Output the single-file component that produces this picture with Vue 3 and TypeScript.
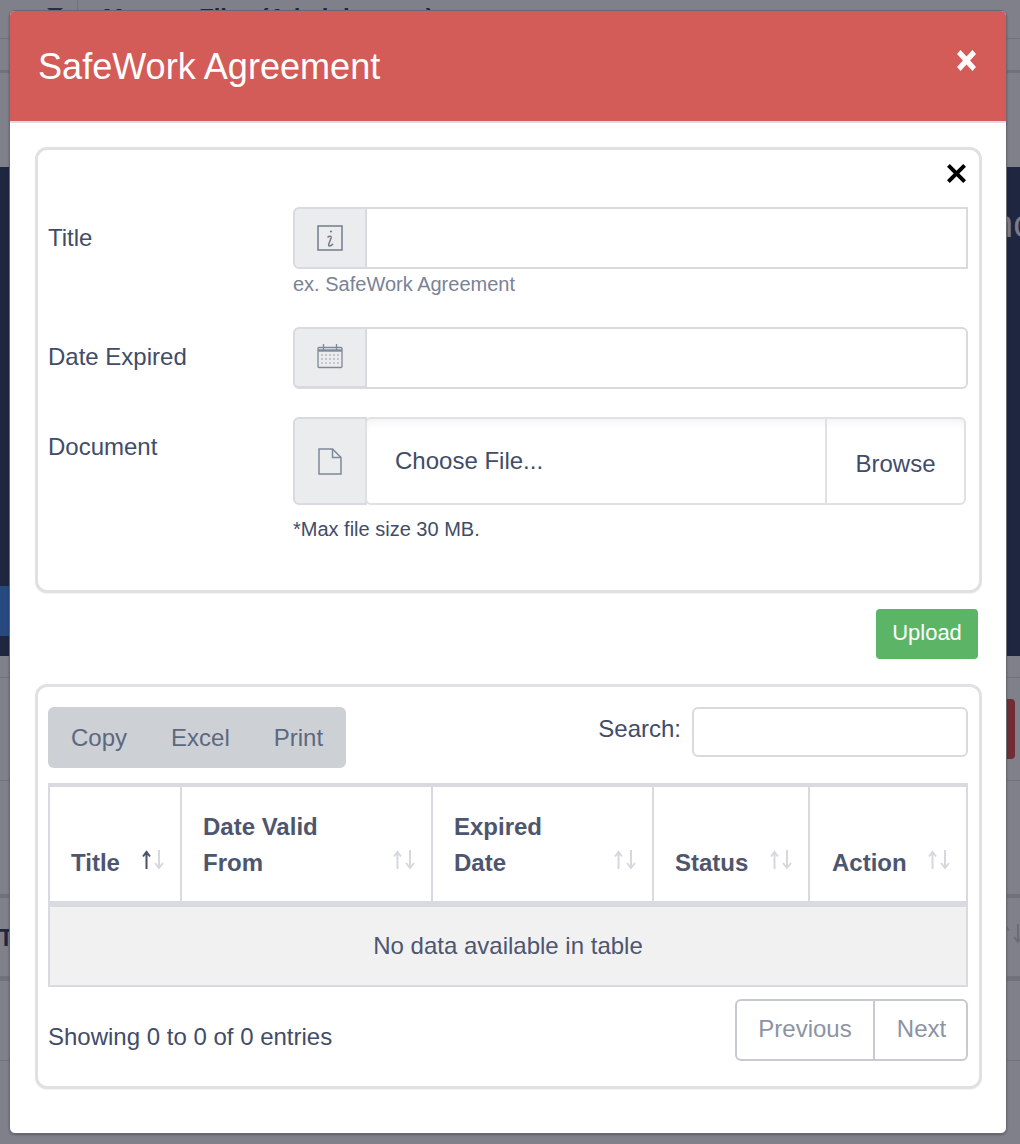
<script setup lang="ts">
interface Col { label: string[]; width: number; active?: boolean }
const cols: Col[] = [
  { label: ['Title'], width: 132, active: true },
  { label: ['Date Valid', 'From'], width: 251 },
  { label: ['Expired', 'Date'], width: 221 },
  { label: ['Status'], width: 156 },
  { label: ['Action'], width: 156 },
]
const dots: [number, number][] = []
for (let r = 0; r < 3; r++) for (let c = 0; c < 5; c++) dots.push([5 + c * 4, 11 + r * 4])
</script>

<template>
  <div class="page">
    <div class="backdrop">
      <div class="bg-row r1"><span class="caret"></span><span class="vline"></span><span class="page-title">Manage Files (Administrator)</span></div>
      <div class="bg-row r2"></div>
      <div class="bg-row r3"></div>
      <div class="navy"><span class="navy-text">nc</span><span class="blue-btn"></span></div>
      <div class="bg-row r4"></div>
      <div class="bg-row r5"><span class="red-btn"></span></div>
      <div class="bg-row r6"></div>
      <div class="bg-row r7">
        <b class="bg-t">T</b>
        <svg class="bg-sort" viewBox="0 0 24 20" width="24" height="20"><g fill="none" stroke="#6b6c78" stroke-width="2"><path d="M4.500 19V3M1 6.500 4.500 2 8 6.500"/><path d="M17 0v17M13 13l4 5 4-5"/></g></svg>
      </div>
      <div class="bg-row r8"></div>
      <div class="bg-row r9"></div>
    </div>

    <section class="modal">
      <header class="modal-head">
        <h1>SafeWork Agreement</h1>
        <svg class="x-white" viewBox="2 2 16 16" width="19" height="21" preserveAspectRatio="none"><path d="M2 5 5 2l5 5 5-5 3 3-5 5 5 5-3 3-5-5-5 5-3-3 5-5z" fill="#fff"/></svg>
      </header>
      <div class="modal-body">
        <div class="card form-card">
          <svg class="x-black" viewBox="1.500 1.500 17 17" width="19" height="19"><path d="M1.500 4 4 1.500l6 6 6-6L18.500 4l-6 6 6 6-2.500 2.500-6-6-6 6L1.500 16l6-6z" fill="#000"/></svg>

          <div class="field first">
            <label>Title</label>
            <div class="field-main">
              <div class="group square">
                <span class="addon">
                  <svg viewBox="0 0 26 26" width="26" height="26" fill="none" stroke="#737c8e" stroke-width="1.500"><rect x="1" y="1" width="24" height="24"/><path d="M10.500 12.500c2-2 4.300-1.500 3.600.6l-2.300 6c-.7 2.100 1 3 4.200-.2" stroke-width="1.500"/><circle cx="14" cy="6.500" r="1.100" fill="#737c8e" stroke="none"/></svg>
                </span>
                <span class="control"></span>
              </div>
              <small class="help">ex. SafeWork Agreement</small>
            </div>
          </div>

          <div class="field second">
            <label>Date Expired</label>
            <div class="field-main">
              <div class="group">
                <span class="addon">
                  <svg class="cal" viewBox="0 0 26 26" width="26" height="26" fill="none" stroke="#7f8899" stroke-width="1.300"><rect x="1" y="3.500" width="24" height="20" rx="1"/><path d="M1 6.500h24" stroke-width="2.400"/><path d="M6.500 0v6M19.500 0v6"/><circle v-for="(d, i) in dots" :key="i" :cx="d[0]" :cy="d[1]" r=".8" fill="#8f97a6" stroke="none"/></svg>
                </span>
                <span class="control"></span>
              </div>
            </div>
          </div>

          <div class="field third">
            <label>Document</label>
            <div class="field-main">
              <div class="group file">
                <span class="addon">
                  <svg viewBox="0 0 24 27" width="24" height="27" fill="none" stroke="#7f8899" stroke-width="1.500"><path d="M1 1h13.500L23 9.500V26H1z"/><path d="M14.500 1v8.500H23"/></svg>
                </span>
                <span class="file-box">
                  <span class="file-name">Choose File...</span>
                  <span class="browse">Browse</span>
                </span>
              </div>
              <small class="note">*Max file size 30 MB.</small>
            </div>
          </div>
        </div>

        <div class="upload-row"><button class="upload">Upload</button></div>

        <div class="card table-card">
          <div class="toolbar">
            <div class="exports"><span>Copy</span><span>Excel</span><span>Print</span></div>
            <div class="search"><label>Search:</label><span class="search-box"></span></div>
          </div>
          <table>
            <colgroup><col v-for="c in cols" :key="c.label[0]" :style="{ width: c.width + 'px' }" /></colgroup>
            <thead>
              <tr>
                <th v-for="c in cols" :key="c.label[0]">
                  <span class="th-text"><span v-for="l in c.label" :key="l">{{ l }}</span></span>
                  <svg class="sort" viewBox="0 0 24 20" width="24" height="20">
                    <g fill="none" stroke-width="2">
                      <path d="M4.500 19V3M1 6.500 4.500 2 8 6.500" :stroke="c.active ? '#4a5369' : '#d5d8df'"/>
                      <path d="M17 0v17M13 13l4 5 4-5" stroke="#d5d8df"/>
                    </g>
                  </svg>
                </th>
              </tr>
            </thead>
            <tbody>
              <tr><td colspan="5">No data available in table</td></tr>
            </tbody>
          </table>
          <div class="table-foot">
            <span class="info">Showing 0 to 0 of 0 entries</span>
            <div class="pager"><span class="prev">Previous</span><span class="next">Next</span></div>
          </div>
        </div>
      </div>
    </section>
  </div>
</template>

<style>
html, body { margin: 0; padding: 0; }
</style>

<style scoped>
.page {
  position: relative;
  width: 1020px;
  height: 1144px;
  overflow: hidden;
  font-family: "Liberation Sans", Arial, sans-serif;
  color: #414c68;
  background: #80808a;
}
.backdrop { display: flex; flex-direction: column; height: 100%; }
.bg-row { box-sizing: border-box; border-bottom: 1px solid #71717c; position: relative; }
.r1 { height: 39px; }
.r2 { height: 34px; border-bottom: 3px solid #71717c; }
.r3 { height: 94px; border-bottom: 0; }
.navy { height: 489px; background: #1f2640; position: relative; }
.r4 { height: 22px; }
.r5 { height: 103px; }
.r6 { height: 117px; border-bottom: 4px solid #71717c; }
.r7 { height: 83px; border-bottom: 5px solid #71717c; }
.r8 { height: 80px; }
.r9 { flex: 1; border-bottom: 0; }
.caret { position: absolute; left: 47px; top: 8px; width: 0; height: 0; border-left: 8px solid transparent; border-right: 8px solid transparent; border-top: 8px solid #2a2f45; }
.vline { position: absolute; left: 77px; top: 0; width: 1px; height: 12px; background: #71717c; }
.page-title { position: absolute; left: 103px; top: 4px; font-size: 24px; font-weight: 700; color: #1f2640; white-space: nowrap; }
.navy-text { position: absolute; left: 992px; top: 37px; font-size: 38px; line-height: 40px; color: #777b8a; }
.blue-btn { position: absolute; left: 0; top: 419px; width: 10px; height: 50px; background: #26497f; }
.red-btn { position: absolute; left: 990px; top: 21px; width: 25px; height: 60px; border-radius: 4px; background: #6f2d35; }
.bg-t { position: absolute; left: -1px; top: 27px; font-size: 23px; color: #1f2640; }
.bg-sort { position: absolute; left: 1001px; top: 26px; }

.modal {
  position: absolute;
  left: 9px;
  top: 10px;
  width: 998px;
  height: 1124px;
  box-sizing: border-box;
  border: 1px solid #696974;
  border-radius: 6px;
  background: #fff;
  overflow: hidden;
  box-shadow: 0 1px 2px rgba(30, 30, 45, 0.35);
}
.modal-head {
  height: 112px;
  box-sizing: border-box;
  background: #d35c58;
  border-bottom: 2px solid #dddde2;
  display: flex;
  align-items: flex-start;
  justify-content: space-between;
  padding: 0 30px 0 28px;
}
.modal-head h1 { margin: 34px 0 0; font-size: 36.100px; line-height: 44px; font-weight: 400; color: #fff; }
.x-white { margin-top: 39px; }
.modal-body { padding: 24px 25px 0 25px; }
.card {
  box-sizing: border-box;
  width: 947px;
  border: 3px solid #e1e1e3;
  border-radius: 12px;
  background: #fff;
  position: relative;
  box-shadow: 0 1px 1px rgba(0, 0, 0, 0.05);
}
.form-card { height: 446px; padding: 0 10px; }
.x-black { position: absolute; right: 13px; top: 14px; }
.field { display: flex; }
.field label { width: 245px; font-size: 24px; line-height: 30px; }
.field-main { width: 675px; }
.first { padding-top: 57px; }
.first label { padding-top: 16px; }
.second { padding-top: 30px; }
.second label { padding-top: 15px; }
.third { padding-top: 28px; }
.third label { padding-top: 15px; }
.group { display: flex; height: 62px; box-sizing: border-box; }
.addon {
  width: 74px;
  box-sizing: border-box;
  flex: none;
  background: #ebecee;
  border: 2px solid #d9dae0;
  border-radius: 6px 0 0 6px;
  display: flex;
  align-items: center;
  justify-content: center;
}
.control { flex: 1; border: 2px solid #d9dae0; border-left: 0; border-radius: 0 6px 6px 0; }
.square .control { border-radius: 0; }
.second .addon { border-bottom-width: 3px; }
.cal { margin-bottom: 2px; }
.help { display: block; margin-top: 2px; font-size: 20px; line-height: 26px; color: #7a8296; }
.file { height: 88px; width: 673px; }
.file-box {
  flex: 1;
  display: flex;
  box-sizing: border-box;
  border: 2px solid #e1e1e3;
  border-radius: 6px;
  margin-left: -2px;
  background: #fff;
  box-shadow: inset 0 8px 8px -5px rgba(0, 0, 0, 0.06);
  font-size: 24px;
}
.file-name { flex: 1; padding: 27px 0 0 28px; line-height: 30px; }
.browse { width: 139px; box-sizing: border-box; border-left: 2px solid #e1e1e3; text-align: center; padding-top: 30px; line-height: 30px; }
.note { display: block; margin-top: 11px; font-size: 20px; line-height: 26px; }

.upload-row { display: flex; justify-content: flex-end; padding: 16px 3px 0 0; }
.upload {
  width: 102px;
  height: 50px;
  border: 0;
  border-radius: 4px;
  background: #5cb567;
  color: #fff;
  font: 400 22px/26px "Liberation Sans", Arial, sans-serif;
  padding: 0 0 2px;
}
.table-card { margin-top: 25px; height: 405px; padding: 20px 11px 0 10px; }
.toolbar { display: flex; justify-content: space-between; align-items: flex-start; }
.exports {
  display: flex;
  height: 61px;
  width: 298px;
  box-sizing: border-box;
  align-items: center;
  padding-left: 23px;
  gap: 44px;
  border-radius: 6px;
  background: #cdd0d5;
  color: #5d6880;
  font-size: 24px;
}
.search { display: flex; align-items: flex-start; }
.search label { font-size: 24px; line-height: 44px; margin-right: 11px; }
.search-box { width: 276px; height: 50px; box-sizing: border-box; border: 2px solid #d9dae0; border-radius: 6px; }
table {
  width: 920px;
  box-sizing: border-box;
  margin-top: 15px;
  border-collapse: separate;
  border-spacing: 0;
  table-layout: fixed;
  border: 2px solid #d9dae0;
  border-top-width: 4px;
  color: #4d566e;
}
th {
  position: relative;
  height: 120px;
  box-sizing: border-box;
  vertical-align: bottom;
  text-align: left;
  font-size: 24px;
  line-height: 36px;
  padding: 0 0 20px 21px;
  border-right: 2px solid #d9dae0;
  border-bottom: 6px solid #d9dae0;
}
th:last-child { border-right: 0; padding-left: 22px; }
.th-text { display: flex; flex-direction: column; }
.sort { position: absolute; right: 14px; bottom: 31px; }
td {
  height: 78px;
  padding: 0;
  text-align: center;
  background: #f1f1f2;
  font-size: 24px;
}
.table-foot { display: flex; justify-content: space-between; align-items: flex-start; margin-top: 12px; }
.info { font-size: 24px; line-height: 30px; padding-top: 23px; }
.pager {
  display: flex;
  height: 62px;
  box-sizing: border-box;
  border: 2px solid #c7cad3;
  border-radius: 6px;
  color: #8b93a5;
  font-size: 24px;
  line-height: 56px;
}
.prev { width: 136px; text-align: center; border-right: 2px solid #c7cad3; }
.next { width: 89px; padding-left: 2px; text-align: center; }
</style>
